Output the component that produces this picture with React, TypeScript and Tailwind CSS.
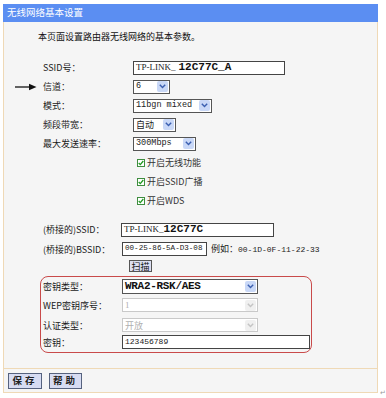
import React from "react";

const cjk = "font-['Noto_Sans_CJK_SC','Noto_Sans',sans-serif]";

function Arrow({ disabled }: { disabled?: boolean }) {
  return (
    <span
      className={
        disabled
          ? "flex h-[11px] w-[11px] items-center justify-center rounded-[2px] bg-[#f0f0f0]"
          : "flex h-[11px] w-[11px] items-center justify-center rounded-[2px] bg-[#c9d8f7]"
      }
    >
      <svg width="7" height="5" viewBox="0 0 7 5">
        <path
          d="M0.8 0.8 L3.5 3.6 L6.2 0.8"
          fill="none"
          stroke={disabled ? "#c4c4c4" : "#3b5fb0"}
          strokeWidth="1.4"
        />
      </svg>
    </span>
  );
}

function Select({
  w,
  children,
  disabled,
  h = "h-[14px]",
}: {
  w: string;
  children: React.ReactNode;
  disabled?: boolean;
  h?: string;
}) {
  return (
    <div
      className={`${w} ${h} flex items-center justify-between whitespace-nowrap border bg-white pl-[2px] pr-[1px] ${
        disabled ? "border-[#c9c9c9] text-[#b0b0b0]" : "border-[#555] text-[#222]"
      }`}
    >
      <span className="flex items-center leading-none">{children}</span>
      <Arrow disabled={disabled} />
    </div>
  );
}

function Label({ children, w }: { children: React.ReactNode; w: string }) {
  return (
    <div className={`${w} shrink-0 whitespace-nowrap ${cjk} text-[9px] leading-none text-[#1a1a1a]`}>
      {children}
    </div>
  );
}

function Check({ label }: { label: React.ReactNode }) {
  return (
    <div className="flex h-[19px] items-center pl-[133px]">
      <span className="flex h-[8px] w-[8px] items-center justify-center border border-[#3f8d3f] bg-white">
        <svg width="6" height="6" viewBox="0 0 6 6">
          <path d="M0.7 3 L2.3 4.6 L5.3 1" fill="none" stroke="#1f9a1f" strokeWidth="1.3" />
        </svg>
      </span>
      <span className={`ml-[2px] ${cjk} text-[9px] leading-none text-[#333]`}>{label}</span>
    </div>
  );
}

const mono = "font-['Liberation_Mono',monospace]";
const serif = "font-['Liberation_Serif',serif]";

export default function App() {
  return (
    <div className="flex h-[398px] w-[386px] items-end bg-white">
      <div className="mb-[5px] ml-[3px] flex h-[389px] w-[377px] flex-col">
        <div className={`flex h-[18px] items-center bg-[#5b8ef2] pl-[4px] ${cjk} text-[9.5px] leading-none text-white`}>
          无线网络基本设置
        </div>
        <div className="flex flex-1 flex-col border-x border-[#efd9b6] bg-[#f5f5f5]">
          <div className={`mt-[7px] flex h-[14px] items-center pl-[34px] ${cjk} text-[9px] leading-none text-[#111]`}>
            本页面设置路由器无线网络的基本参数。
          </div>

          <div className="mt-[15px] flex flex-col">
            <div className="flex h-[19px] items-center pl-[39px]">
              <Label w="w-[90px]">SSID号：</Label>
              <div className="flex h-[14px] w-[152px] items-center whitespace-nowrap border border-[#444] bg-white pl-[2px]">
                <span className={`${serif} text-[9px] leading-none text-[#222]`}>TP-LINK_</span>
                <span className={`${mono} ml-[3px] text-[11px] font-bold leading-none text-[#111]`}>12C77C_A</span>
              </div>
            </div>
            <div className="flex h-[19px] items-center">
              <div className="flex w-[39px] shrink-0 items-center pl-[11px]">
                <svg width="22" height="8" viewBox="0 0 22 8">
                  <path d="M0 4 H17" stroke="#111" strokeWidth="1.3" />
                  <path d="M14 0.8 L21.5 4 L14 7.2 Z" fill="#111" />
                </svg>
              </div>
              <Label w="w-[90px]">信道：</Label>
              <Select w="w-[37px]">
                <span className={`${mono} text-[8.5px]`}>6</span>
              </Select>
            </div>
            <div className="flex h-[19px] items-center pl-[39px]">
              <Label w="w-[90px]">模式：</Label>
              <Select w="w-[79px]">
                <span className={`${mono} text-[8.5px]`}>11bgn mixed</span>
              </Select>
            </div>
            <div className="flex h-[19px] items-center pl-[39px]">
              <Label w="w-[90px]">频段带宽：</Label>
              <Select w="w-[43px]">
                <span className={`${cjk} text-[9px]`}>自动</span>
              </Select>
            </div>
            <div className="flex h-[19px] items-center pl-[39px]">
              <Label w="w-[90px]">最大发送速率：</Label>
              <Select w="w-[63px]">
                <span className={`${mono} text-[8.5px]`}>300Mbps</span>
              </Select>
            </div>
            <Check label="开启无线功能" />
            <Check label="开启SSID广播" />
            <Check label="开启WDS" />
          </div>

          <div className="mt-[10px] flex flex-col">
            <div className="flex h-[19px] items-center pl-[39px]">
              <Label w="w-[78px]">(桥接的)SSID：</Label>
              <div className="flex h-[14px] w-[153px] items-center whitespace-nowrap border border-[#444] bg-white pl-[2px]">
                <span className={`${serif} text-[9px] leading-none text-[#222]`}>TP-LINK_</span>
                <span className={`${mono} text-[11px] font-bold leading-none text-[#111]`}>12C77C</span>
              </div>
            </div>
            <div className="flex h-[20px] items-center pl-[39px]">
              <Label w="w-[79px]">(桥接的)BSSID：</Label>
              <div className="flex h-[14px] w-[85px] shrink-0 items-center whitespace-nowrap border border-[#444] bg-white pl-[2px]">
                <span className={`${mono} text-[7.6px] leading-none text-[#222]`}>00-25-86-5A-D3-08</span>
              </div>
              <span className={`ml-[4px] whitespace-nowrap ${cjk} text-[9px] leading-none text-[#222]`}>
                例如：<span className={`${mono} text-[8px]`}>00-1D-0F-11-22-33</span>
              </span>
            </div>
            <div className="flex h-[14px] items-center pl-[121px]">
              <div className={`ml-[4px] flex h-[12px] w-[23px] items-center justify-center whitespace-nowrap border border-[#555] bg-[#dcdff2] ${cjk} text-[9px] leading-none text-[#111]`}>
                扫描
              </div>
            </div>
          </div>

          <div className="ml-[36px] mt-[3px] flex w-[272px] flex-col rounded-[8px] border border-[#c94a4a] pl-[2px]">
            <div className="flex h-[18px] items-center">
              <Label w="w-[79px]">密钥类型：</Label>
              <Select w="w-[136px]" h="h-[15px]">
                <span className={`${mono} text-[11px] font-bold tracking-[-0.3px] text-[#111]`}>WRA2-RSK/AES</span>
              </Select>
            </div>
            <div className="flex h-[20px] items-center">
              <Label w="w-[79px]">WEP密钥序号：</Label>
              <Select w="w-[136px]" disabled>
                <span className={`${serif} text-[9px]`}>1</span>
              </Select>
            </div>
            <div className="flex h-[20px] items-center">
              <Label w="w-[79px]">认证类型：</Label>
              <Select w="w-[136px]" disabled>
                <span className={`${cjk} text-[9px]`}>开放</span>
              </Select>
            </div>
            <div className="flex h-[17px] items-start">
              <Label w="w-[79px] pt-[3px]">密钥：</Label>
              <div className="flex h-[14px] w-[188px] items-center border border-[#444] bg-white pl-[2px]">
                <span className={`${mono} text-[8px] leading-none text-[#222]`}>123456789</span>
              </div>
            </div>
          </div>

          <div className="mt-auto flex h-[25px] items-center gap-[7px] border-y border-[#efd9b6] pl-[4px]">
            <div className={`flex h-[16px] w-[34px] items-center justify-center border border-[#56627e] bg-[#d7dcf2] ${cjk} text-[9.5px] font-bold leading-none tracking-[3px] text-[#222]`}>
              保存
            </div>
            <div className={`flex h-[16px] w-[33px] items-center justify-center border border-[#56627e] bg-[#d7dcf2] ${cjk} text-[9.5px] font-bold leading-none tracking-[3px] text-[#222]`}>
              帮助
            </div>
          </div>
        </div>
      </div>
      <span className="mb-[2px] ml-[2px] text-[7px] leading-none text-[#999]">↵</span>
    </div>
  );
}
